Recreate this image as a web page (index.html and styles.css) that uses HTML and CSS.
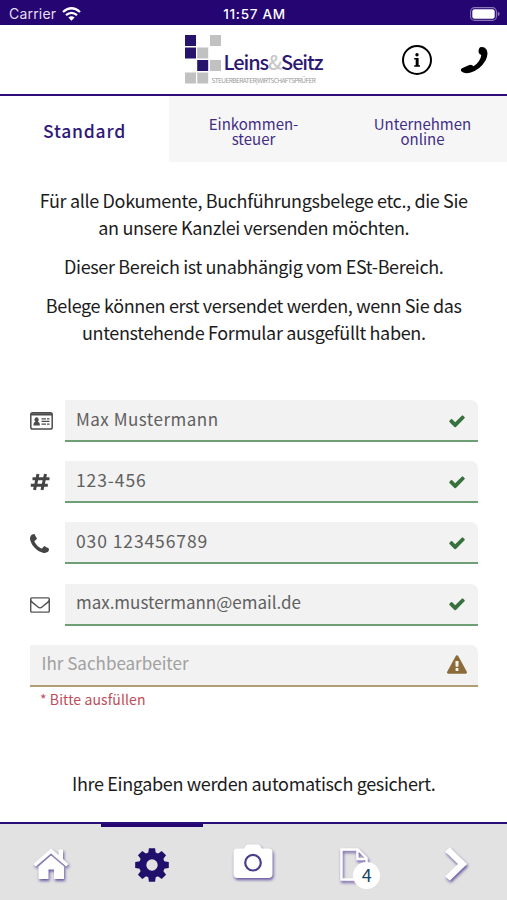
FILE: index.html
```html
<!DOCTYPE html>
<html lang="de">
<head>
<meta charset="utf-8">
<meta name="viewport" content="width=device-width, initial-scale=1">
<title>Leins&amp;Seitz</title>
<link rel="stylesheet" href="styles.css">
</head>
<body>
<svg class="defs" width="0" height="0">
  <symbol id="check" viewBox="0 0 1792 1792"><path d="M1671 566q0 40-28 68l-724 724-136 136q-28 28-68 28t-68-28l-136-136-362-362q-28-28-28-68t28-68l136-136q28-28 68-28t68 28l294 295 656-657q28-28 68-28t68 28l136 136q28 28 28 68z"/></symbol>
  <symbol id="phone" viewBox="192 128 1408 1408"><path d="M1600 1240q0 27-10 70.5t-21 68.5q-21 50-122 106-94 51-186 51-27 0-53-3.5t-57.5-12.5-47-14.5-55.5-20.5-49-18q-98-35-175-83-127-79-264-216t-216-264q-48-77-83-175-3-9-18-49t-20.5-55.5-14.5-47-12.5-57.5-3.5-53q0-92 51-186 56-101 106-122 25-11 68.5-21t70.5-10q14 0 21 3 18 6 53 76 11 19 30 54t35 63.5 31 53.5q3 4 17.5 25t21.5 35.5 7 28.5q0 20-28.5 50t-62 55-62 53-28.5 46q0 9 5 22.5t8.5 20.5 14 24 11.5 19q76 137 174 235t235 174q2 1 19 11.5t24 14 20.5 8.5 22.5 5q18 0 46-28.5t53-62 55-62 50-28.5q14 0 28.5 7t35.5 21.5 25 17.5q25 15 53.5 31t63.5 35 54 30q70 35 76 53 3 7 3 21z"/></symbol>
</svg>
<div class="app">
  <div class="status">
    <span class="carrier">Carrier
      <svg width="19" height="14" viewBox="0 0 19 14" fill="none" stroke="#fff" stroke-width="2.3"><path d="M1 5Q9.500-2.500 18 5M4 8.200Q9.500 3.500 15 8.200"/><path d="M9.500 13.700L6.400 10.500Q9.500 7.800 12.600 10.500Z" fill="#fff" stroke="none"/></svg>
    </span>
    <span class="clock">11:57 AM</span>
    <svg class="battery" width="30" height="14" viewBox="0 0 30 14"><rect x=".6" y=".6" width="25.800" height="12.800" rx="4" fill="none" stroke="#8a78b8" stroke-width="1.100"/><rect x="2.300" y="2.300" width="22.400" height="9.400" rx="2.200" fill="#fff"/><path d="M27.700 4.800q2 .6 2 2.200t-2 2.200z" fill="#8a78b8"/></svg>
  </div>
  <header class="header">
    <div class="logo">
      <svg class="tiles" width="37" height="49" viewBox="0 0 37 49"><g fill="#27126c"><path d="M0 0h11v11H0zM0 12.500h11v11H0zM12.200 25h11v11h-11z"/></g><g fill="#c1c1c1"><path d="M25 0h11v11H25zM12.200 12.500h11v11h-11zM25 25h11v11H25zM0 37.500h11v11H0zM12.200 37.500h11v11h-11z"/></g></svg>
      <div class="words"><div class="name">Leins<span>&amp;</span>Seitz</div><div class="claim">STEUERBERATER|WIRTSCHAFTSPRÜFER</div></div>
    </div>
    <div class="actions">
      <svg width="32" height="32" viewBox="0 0 32 32"><circle cx="16" cy="16" r="14" fill="none" stroke="#000" stroke-width="2"/><circle cx="16" cy="10.700" r="1.700"/><path d="M13.200 14h4.400v7.200H19v1.600h-5.800v-1.600h1.500v-5.600h-1.500z"/></svg>
      <svg width="28" height="28" viewBox="0 0 28 28"><path d="M20 1.300Q18.200 3.200 18.600 6.200Q19 8.500 21.300 8.900Q20.500 15.500 13.500 20.300Q11.500 17.500 8.200 19.500L2 22.300Q0 23.500 1.600 25.500Q4.500 28 10 26.800Q20 24 25.500 14.500Q29 7.500 26.300 3.200Q24 .2 20 1.300Z"/></svg>
    </div>
  </header>
  <nav class="tabs">
    <a class="tab active">Standard</a>
    <a class="tab">Einkommen-<br>steuer</a>
    <a class="tab">Unternehmen<br>online</a>
  </nav>
  <main>
    <div class="intro">
      <p>Für alle Dokumente, Buchführungsbelege etc., die Sie<br>an unsere Kanzlei versenden möchten.</p>
      <p>Dieser Bereich ist unabhängig vom ESt-Bereich.</p>
      <p>Belege können erst versendet werden, wenn Sie das<br>untenstehende Formular ausgefüllt haben.</p>
    </div>
    <div class="form">
      <div class="row">
        <svg class="lead" width="23" height="18" viewBox="0 0 23 18"><rect x=".8" y=".8" width="21.400" height="16.200" rx="1.800" fill="none" stroke="#4c4c4c" stroke-width="1.500"/><path d="M1 1.200h21v2.200H1zM3.500 13.500v-1.300q0-2.200 2-2.400Q4.300 8.800 4.500 7.200 4.800 5.300 6.600 5.300T8.700 7.200Q8.900 8.800 7.800 9.800q2 .2 2 2.400v1.300zM11.500 6.200H16v1.200h-4.500zM17 6.200h2.500v1.200H17zM11.500 8.800h8V10h-8zM11.500 11.500H16v1.200h-4.500zM17 11.500h2.500v1.200H17z" fill="#4c4c4c"/></svg>
        <div class="field"><span class="text">Max Mustermann</span><svg class="ok"><use href="#check"/></svg></div>
      </div>
      <div class="row">
        <svg class="lead" width="20" height="18" viewBox="0 0 20 18"><path d="M8 1L4.500 17M15.500 1L12 17M2.500 5.700h17M.8 12.300h17" fill="none" stroke="#444" stroke-width="3"/></svg>
        <div class="field"><span class="digits">123-456</span><svg class="ok"><use href="#check"/></svg></div>
      </div>
      <div class="row">
        <svg class="lead" width="19" height="19" fill="#444"><use href="#phone"/></svg>
        <div class="field"><span class="digits">030 123456789</span><svg class="ok"><use href="#check"/></svg></div>
      </div>
      <div class="row">
        <svg class="lead" width="20" height="16" viewBox="0 256 1792 1408" fill="#555"><path d="M1664 1504v-768q-32 36-69 66-268 206-426 338-51 43-83 67t-86.500 48.500-102.500 24.500h-2q-48 0-102.500-24.500t-86.500-48.500-83-67q-158-132-426-338-37-30-69-66v768q0 13 9.500 22.500t22.500 9.500h1472q13 0 22.500-9.500t9.500-22.500zm0-1051v-24.500l-.5-13-3-12.500-5.500-9-9-7.500-14-2.500h-1472q-13 0-22.500 9.500t-9.500 22.500q0 168 147 284 193 152 401 317 6 5 35 29.500t46 37.500 44.500 31.500 50.500 27.500 43 9h2q20 0 43-9t50.500-27.500 44.500-31.500 46-37.500 35-29.500q208-165 401-317 54-43 100.500-115.500t46.500-131.500zm128-37v1088q0 66-47 113t-113 47h-1472q-66 0-113-47t-47-113v-1088q0-66 47-113t113-47h1472q66 0 113 47t47 113z"/></svg>
        <div class="field"><span>max.mustermann@email.de</span><svg class="ok"><use href="#check"/></svg></div>
      </div>
      <div class="row">
        <div class="field warn"><span>Ihr Sachbearbeiter</span><svg class="alert" viewBox="0 0 1792 1664"><path d="M1024 1375v-190q0-14-9.500-23.500t-22.500-9.500h-192q-13 0-22.500 9.500t-9.500 23.500v190q0 14 9.500 23.500t22.500 9.500h192q13 0 22.500-9.500t9.500-23.500zm-2-374l18-459q0-12-10-19-13-11-24-11h-220q-11 0-24 11-10 7-10 21l17 457q0 10 10 16.500t24 6.500h185q14 0 23.500-6.500t10.500-16.500zm-14-934l768 1408q35 63-2 126-17 29-46.500 46t-63.500 17h-1536q-34 0-63.500-17t-46.500-46q-37-63-2-126l768-1408q17-31 47-49t65-18 65 18 47 49z"/></svg></div>
      </div>
      <div class="error">* Bitte ausfüllen</div>
    </div>
    <p class="saved">Ihre Eingaben werden automatisch gesichert.</p>
  </main>
  <nav class="bottom">
    <a class="item"><svg width="36" height="32" viewBox="0 0 36 32" fill="#fff"><path d="M18 0.500L25.500 7V1.500h4.500v9.500l5.500 5-2.300 2.500L18 5.500 2.800 18.500.5 16z"/><path d="M18 7.500L31 18.500V31H21V21.500h-5.500V31H5.500V18.500z"/></svg></a>
    <a class="item current"><svg width="34" height="34" viewBox="-17 -17 34 34"><g fill="#20106b"><path id="tooth" d="M-4-10L-3.100-16.800H3.100L4-10V10L3.100 16.800H-3.100L-4 10z"/><use href="#tooth" transform="rotate(45)"/><use href="#tooth" transform="rotate(90)"/><use href="#tooth" transform="rotate(135)"/><circle r="12.900"/></g><circle r="5.700" fill="#e2e2e2"/></svg></a>
    <a class="item camera"><svg width="40" height="36" viewBox="0 0 40 36"><path d="M4.500 4.500H11L13 1.500Q13.800.5 15 .5H25Q26.200.5 27 1.500L29 4.500H35.500Q39.500 4.500 39.500 8.500V30Q39.500 34 35.500 34H4.500Q.5 34 .5 30V8.500Q.5 4.500 4.500 4.500Z" fill="#fff"/><circle cx="20" cy="18.700" r="7.800" fill="none" stroke="#4b3d8c" stroke-width="2.200"/></svg></a>
    <a class="item"><svg width="29" height="33" viewBox="0 0 30 34" fill="none" stroke="#fff" stroke-width="2.500"><path d="M1.500 1.500H18.500L27.500 10.500V32.500H1.500zM18 1.500V11.300H27.500"/></svg><span class="badge">4</span></a>
    <a class="item"><svg width="24" height="34" viewBox="0 0 24 34"><path d="M3.500 2.500L18.500 17 3.500 31.500" fill="none" stroke="#fff" stroke-width="6.500"/></svg></a>
  </nav>
</div>
</body>
</html>
```
FILE: styles.css
```css
* { box-sizing: border-box; }
body { margin: 0; background: #fff; font-family: "Noto Sans CJK SC", "Noto Sans", sans-serif; color: #1c1c1c; }
.defs { display: block; position: absolute; }
.app { width: 507px; height: 900px; display: flex; flex-direction: column; overflow: hidden; }
.status { height: 25px; flex: none; background: #250571; color: #fff; display: grid; grid-template-columns: 1fr auto 1fr; align-items: center; padding: 2px 7px 0 9px; font: 14px/20px Inter, sans-serif; }
.carrier { display: flex; align-items: center; gap: 6px; color: #e5dff0; letter-spacing: .2px; }
.clock { font-weight: 500; font-size: 13.5px; letter-spacing: .7px; }
.battery { justify-self: end; }
.header { height: 71px; flex: none; border-bottom: 2px solid #2d0c78; display: grid; grid-template-columns: 1fr 138px 1fr; align-items: center; }
.logo { grid-column: 2; display: flex; height: 49px; margin-top: -1px; }
.tiles { flex: none; }
.words { margin-left: 2px; padding-top: 13px; white-space: nowrap; }
.name { font-size: 20px; line-height: 28px; font-weight: 500; letter-spacing: -1.1px; color: #2c1872; }
.name span { color: #c8c8c8; }
.claim { font-size: 6.5px; line-height: 8px; letter-spacing: -.55px; color: #999; margin-left: -12px; }
.actions { display: flex; justify-content: flex-end; align-items: center; gap: 27px; padding-right: 19px; }
.tabs { height: 66px; flex: none; display: grid; grid-template-columns: repeat(3, 1fr); }
.tab { display: flex; align-items: center; justify-content: center; text-align: center; background: #f6f6f6; color: #422d86; font-size: 15px; line-height: 15px; letter-spacing: 0; padding-top: 3px; }
.tab.active { background: #fff; color: #30187a; font-size: 17.5px; font-weight: 500; letter-spacing: .8px; }
main { flex: 1; min-height: 0; padding: 25px 29.5px 0 30px; }
.intro { text-align: center; font-size: 18px; line-height: 27px; letter-spacing: -.35px; height: 213px; white-space: nowrap; }
.intro p { margin: 0 0 12px; }
.form { height: 370px; }
.row { display: flex; align-items: center; height: 42px; margin-bottom: 19.2px; }
.lead { flex: none; }
.field { width: 413px; height: 42px; margin-left: auto; padding: 0 12px 4px 11.5px; display: flex; align-items: center; justify-content: space-between; background: #f2f2f2; border-bottom: 2px solid #6f9f75; border-radius: 0 7px 0 0; font-size: 17px; color: #606060; }
.text { letter-spacing: .5px; }
.digits { font-size: 17.5px; letter-spacing: .9px; }
.ok { width: 18px; height: 18px; fill: #37713e; margin-top: 5px; }
.field.warn { width: 447.5px; border-color: #b39d75; color: #a0a0a0; padding-right: 11px; }
.alert { width: 20px; height: 19px; fill: #8b6c38; margin-top: 3px; }
.error { margin: -17px 0 0 10px; font-size: 14px; line-height: 20px; letter-spacing: .1px; color: #c14c57; }
.saved { margin: 0; text-align: center; font-size: 18px; line-height: 27px; letter-spacing: -.35px; }
.bottom { height: 78px; flex: none; background: #e2e2e2; border-top: 2px solid #290c78; display: grid; grid-template-columns: repeat(5, 1fr); }
.item { position: relative; display: flex; align-items: center; justify-content: center; padding-top: 4px; }
.item > svg { filter: drop-shadow(1px 2px 1.500px #6755a0); overflow: visible; }
.item.current { border-top: 3px solid #250571; padding-top: 3px; }
.item.current > svg { filter: none; }
.item.camera { padding-top: 0; }
.badge { position: absolute; left: 49px; top: 38px; width: 27px; height: 27px; border-radius: 50%; background: #fff; color: #174464; font-size: 18px; line-height: 25px; text-align: center; }
```
